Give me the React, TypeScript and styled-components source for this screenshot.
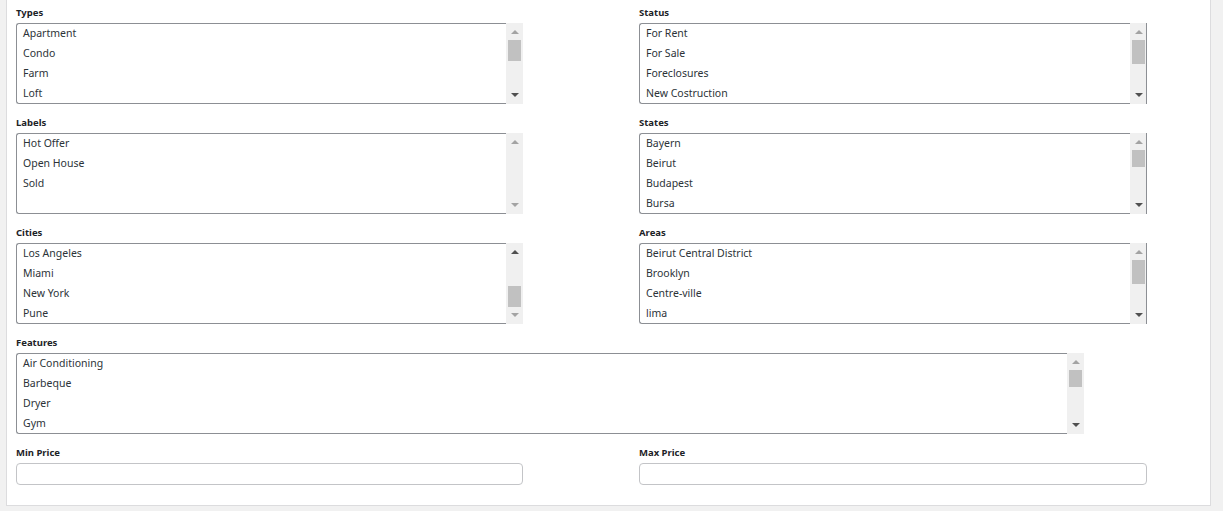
import React from 'react'
import styled, { createGlobalStyle } from 'styled-components'

const GlobalStyle = createGlobalStyle`
  html, body {
    margin: 0;
    padding: 0;
    background: #f1f1f1;
    font-family: 'Noto Sans', 'Open Sans', sans-serif;
    color: #2c3338;
  }
`

interface ScrollInfo {
  top?: number
  height?: number
  up: boolean
  down: boolean
}

interface ListField {
  label: string
  items: string[]
  scroll: ScrollInfo
}

const Page = styled.div`
  padding: 0 12px 6px 6px;
`

const Panel = styled.div`
  background: #fff;
  border: 1px solid #dcdcde;
  border-top: none;
  padding: 4px 9px 20px 9px;
  display: flex;
  flex-direction: column;
  gap: 10px;
`

const Grid = styled.div`
  display: grid;
  grid-template-columns: 507px 508px;
  column-gap: 116px;
  row-gap: 10px;
`

const Field = styled.div<{ $wide?: boolean }>`
  display: flex;
  flex-direction: column;
  gap: 3px;
  width: ${({ $wide }) => ($wide ? '1068px' : 'auto')};
`

const Label = styled.label`
  display: block;
  height: 16px;
  line-height: 18px;
  font-size: 9.5px;
  font-weight: 700;
  color: #1d2327;
`

const Box = styled.div`
  display: flex;
  height: 81px;
`

const Options = styled.ul`
  flex: 1;
  margin: 0;
  padding: 0;
  list-style: none;
  border: 1px solid #8c8f94;
  border-right: none;
  border-radius: 3px 0 0 3px;
  overflow: hidden;
  box-sizing: border-box;
`

const Option = styled.li`
  height: 20px;
  line-height: 18px;
  padding: 0 6px;
  font-size: 10.5px;
  color: #2c3338;
  white-space: nowrap;
`

const Scrollbar = styled.div<{ $edge?: boolean }>`
  position: relative;
  width: 17px;
  background: #f0f0f0;
  box-sizing: border-box;
  border-right: ${({ $edge }) => ($edge ? '1px solid #8c8f94' : 'none')};
`

const Arrow = styled.span<{ $dir: 'up' | 'down'; $active: boolean }>`
  position: absolute;
  left: 5px;
  width: 0;
  height: 0;
  border-left: 4px solid transparent;
  border-right: 4px solid transparent;
  ${({ $dir, $active }) => {
    const c = $active ? '#505050' : '#a3a3a3'
    return $dir === 'up'
      ? `top: 7px; border-bottom: 4px solid ${c};`
      : `bottom: 7px; border-top: 4px solid ${c};`
  }}
`

const Thumb = styled.span<{ $top: number; $height: number }>`
  position: absolute;
  left: 2px;
  width: 13px;
  top: ${({ $top }) => $top}px;
  height: ${({ $height }) => $height}px;
  background: #c1c1c1;
`

const TextInput = styled.input`
  box-sizing: border-box;
  height: 22px;
  width: 100%;
  border: 1px solid #c3c4c7;
  border-radius: 4px;
  background: #fff;
  padding: 0 6px;
  font-size: 11px;
  font-family: inherit;
`

const fields: ListField[] = [
  {
    label: 'Types',
    items: ['Apartment', 'Condo', 'Farm', 'Loft'],
    scroll: { top: 17, height: 21, up: false, down: true },
  },
  {
    label: 'Status',
    items: ['For Rent', 'For Sale', 'Foreclosures', 'New Costruction'],
    scroll: { top: 17, height: 24, up: false, down: true },
  },
  {
    label: 'Labels',
    items: ['Hot Offer', 'Open House', 'Sold'],
    scroll: { up: false, down: false },
  },
  {
    label: 'States',
    items: ['Bayern', 'Beirut', 'Budapest', 'Bursa'],
    scroll: { top: 17, height: 17, up: false, down: true },
  },
  {
    label: 'Cities',
    items: ['Los Angeles', 'Miami', 'New York', 'Pune'],
    scroll: { top: 43, height: 21, up: true, down: false },
  },
  {
    label: 'Areas',
    items: ['Beirut Central District', 'Brooklyn', 'Centre-ville', 'lima'],
    scroll: { top: 17, height: 24, up: false, down: true },
  },
]

const features: ListField = {
  label: 'Features',
  items: ['Air Conditioning', 'Barbeque', 'Dryer', 'Gym'],
  scroll: { top: 17, height: 17, up: false, down: true },
}

function SelectList({ field, edge }: { field: ListField; edge?: boolean }) {
  const { scroll } = field
  return (
    <Box>
      <Options>
        {field.items.map((item) => (
          <Option key={item}>{item}</Option>
        ))}
      </Options>
      <Scrollbar $edge={edge}>
        <Arrow $dir="up" $active={scroll.up} />
        {scroll.top !== undefined && scroll.height !== undefined && (
          <Thumb $top={scroll.top} $height={scroll.height} />
        )}
        <Arrow $dir="down" $active={scroll.down} />
      </Scrollbar>
    </Box>
  )
}

function App() {
  return (
    <Page>
      <GlobalStyle />
      <Panel>
        <Grid>
          {fields.map((f, i) => (
            <Field key={f.label}>
              <Label>{f.label}</Label>
              <SelectList field={f} edge={i % 2 === 1} />
            </Field>
          ))}
        </Grid>
        <Field $wide>
          <Label>{features.label}</Label>
          <SelectList field={features} />
        </Field>
        <Grid>
          <Field>
            <Label>Min Price</Label>
            <TextInput type="text" />
          </Field>
          <Field>
            <Label>Max Price</Label>
            <TextInput type="text" />
          </Field>
        </Grid>
      </Panel>
    </Page>
  )
}

export default App
